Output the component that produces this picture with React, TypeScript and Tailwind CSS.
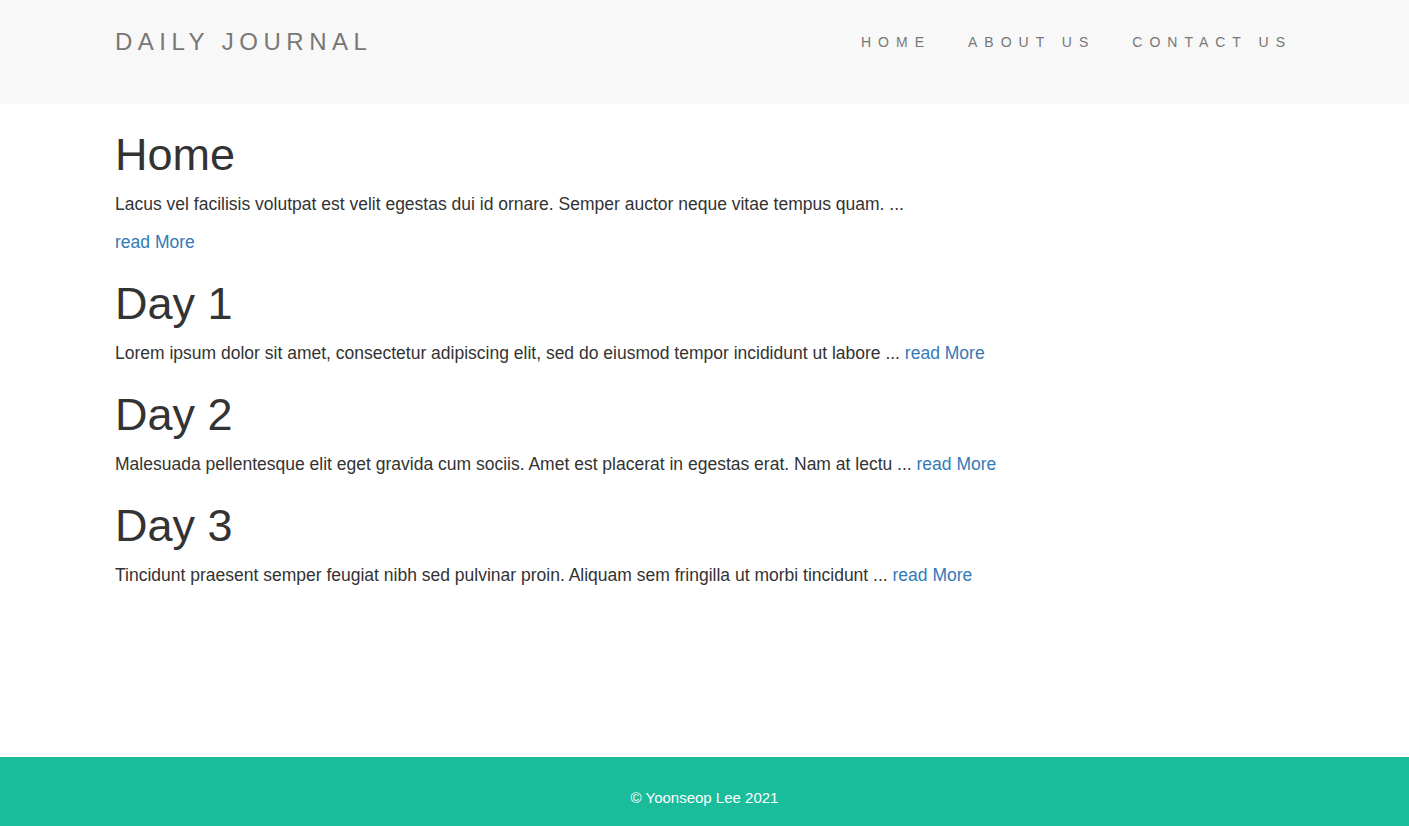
const posts = [
  {
    title: 'Day 1',
    body: 'Lorem ipsum dolor sit amet, consectetur adipiscing elit, sed do eiusmod tempor incididunt ut labore ...',
  },
  {
    title: 'Day 2',
    body: 'Malesuada pellentesque elit eget gravida cum sociis. Amet est placerat in egestas erat. Nam at lectu ...',
  },
  {
    title: 'Day 3',
    body: 'Tincidunt praesent semper feugiat nibh sed pulvinar proin. Aliquam sem fringilla ut morbi tincidunt ...',
  },
];

export default function App() {
  return (
    <div className="min-h-[826px] flex flex-col bg-white text-[#333] font-['Liberation_Sans',Arial,sans-serif]">
      <nav className="h-[104px] bg-[#f8f8f8] px-[115px] flex items-start justify-between">
        <a href="#" className="mt-[28px] text-[24px] leading-[28px] tracking-[5.5px] text-[#777]">
          DAILY JOURNAL
        </a>
        <ul className="flex gap-[7px] mt-[32px] -mr-[13px]">
          {['HOME', 'ABOUT US', 'CONTACT US'].map((item) => (
            <li key={item}>
              <a href="#" className="block px-[15px] text-[14px] leading-[20px] tracking-[7px] text-[#777]">
                {item}
              </a>
            </li>
          ))}
        </ul>
      </nav>

      <main className="flex-1 px-[115px] pt-[14px] flex flex-col items-start">
        <h1 className="mt-[13px] mb-[13px] text-[45px] leading-[47px]">Home</h1>
        <p className="mb-[12px] text-[17.5px] leading-[26px]">
          Lacus vel facilisis volutpat est velit egestas dui id ornare. Semper auctor neque vitae tempus quam. ...
        </p>
        <p className="mb-[12px] text-[17.5px] leading-[26px]">
          <a href="#" className="text-[#337ab7]">read More</a>
        </p>

        {posts.map((post) => (
          <div key={post.title} className="flex flex-col items-start">
            <h1 className="mt-[13px] mb-[13px] text-[45px] leading-[47px]">{post.title}</h1>
            <p className="mb-[12px] text-[17.5px] leading-[26px]">
              {post.body} <a href="#" className="text-[#337ab7]">read More</a>
            </p>
          </div>
        ))}
      </main>

      <footer className="h-[69px] bg-[#1abc9c] text-center pt-[31px]">
        <p className="text-[15px] leading-[20px] text-white">© Yoonseop Lee 2021</p>
      </footer>
    </div>
  );
}
